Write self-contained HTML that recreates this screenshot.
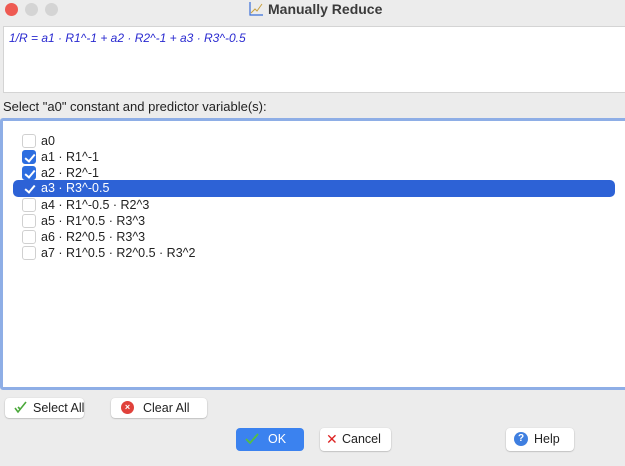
<!DOCTYPE html>
<html><head><style>
*{box-sizing:border-box;margin:0;padding:0}
body{width:625px;height:466px;background:#ececec;font-family:"Liberation Sans",sans-serif;position:relative;overflow:hidden;font-size:13px;color:#222}
.abs{position:absolute}
.dot{position:absolute;top:3px;width:13px;height:13px;border-radius:50%}
.ta{left:3px;top:26px;width:625px;height:67px;background:#fff;border:1px solid #d4d4d4}
.list{left:0;top:118px;width:628px;height:272px;background:#fff;border:3px solid #8eaee6;border-radius:3px}
.row{position:absolute;left:10px;height:16px;line-height:16px;font-size:12.5px;color:#222}
.cb{position:absolute;left:12px;top:1px;width:14px;height:14px;border:1px solid #d0d0d0;border-radius:3px;background:#fff}
.cb.on{background:#2d6ee0;border-color:#2d6ee0}
.cb.on:after{content:"";position:absolute;left:4px;top:1px;width:4px;height:8px;border:solid #fff;border-width:0 2px 2px 0;transform:rotate(40deg)}
.row span{position:absolute;left:31px;white-space:nowrap}
.btn{position:absolute;background:#fff;border-radius:4px;box-shadow:0 0.5px 1.5px rgba(0,0,0,.3);font-size:12.5px;line-height:20px;white-space:nowrap}
</style></head><body>
<div class="dot" style="left:5px;background:#ee5a52"></div>
<div class="dot" style="left:25px;background:#d4d4d4"></div>
<div class="dot" style="left:45px;background:#d4d4d4"></div>
<svg class="abs" style="left:248px;top:1px" width="16" height="16" viewBox="0 0 16 16"><path d="M2 1V14H15" stroke="#3a6fd8" fill="none" stroke-width="1.2"/><path d="M3 12L7 8L9 10L14 3" stroke="#c8a040" fill="none" stroke-width="1"/></svg>
<div class="abs" style="left:268px;top:1px;font-size:14px;font-weight:bold;color:#3b3b3b">Manually Reduce</div>
<div class="abs ta"><div style="position:absolute;left:5px;top:4px;color:#2a2ad0;font-style:italic;font-size:12px">1/R = a1 · R1^-1 + a2 · R2^-1 + a3 · R3^-0.5</div></div>
<div class="abs" style="left:3px;top:99px;font-size:13px;color:#222">Select "a0" constant and predictor variable(s):</div>
<div class="abs list">
<div class="row" style="top:12px;width:600px"><div class="cb" style="left:9px"></div><span style="left:28px">a0</span></div>
<div class="row" style="top:28px;width:600px"><div class="cb on" style="left:9px"></div><span style="left:28px">a1 · R1^-1</span></div>
<div class="row" style="top:44px;width:600px"><div class="cb on" style="left:9px"></div><span style="left:28px">a2 · R2^-1</span></div>
<div class="row" style="top:59px;left:10px;width:602px;height:17px;line-height:17px;background:#2d62d6;border-radius:5px;color:#fff"><div class="cb on" style="left:9px;background:none;border-color:transparent"></div><span style="left:28px">a3 · R3^-0.5</span></div>
<div class="row" style="top:76px;width:600px"><div class="cb" style="left:9px"></div><span style="left:28px">a4 · R1^-0.5 · R2^3</span></div>
<div class="row" style="top:92px;width:600px"><div class="cb" style="left:9px"></div><span style="left:28px">a5 · R1^0.5 · R3^3</span></div>
<div class="row" style="top:108px;width:600px"><div class="cb" style="left:9px"></div><span style="left:28px">a6 · R2^0.5 · R3^3</span></div>
<div class="row" style="top:124px;width:600px"><div class="cb" style="left:9px"></div><span style="left:28px">a7 · R1^0.5 · R2^0.5 · R3^2</span></div>
</div>
<div class="btn" style="left:5px;top:398px;width:79px;height:20px"><svg class="abs" style="left:9px;top:3px" width="14" height="14"><path d="M1 7L4 11L12 1M4 6L6 8" stroke="#4aa83a" fill="none" stroke-width="1.6"/></svg><span class="abs" style="left:28px">Select All</span></div>
<div class="btn" style="left:111px;top:398px;width:96px;height:20px"><div class="abs" style="left:10px;top:3px;width:13px;height:13px;border-radius:50%;background:#e0413b;color:#fff;font-size:9px;line-height:13px;text-align:center;font-weight:bold">×</div><span class="abs" style="left:32px">Clear All</span></div>
<div class="btn" style="left:236px;top:428px;width:68px;height:23px;background:#3b82ef;color:#fff;box-shadow:none"><svg class="abs" style="left:9px;top:5px" width="14" height="12"><path d="M1 6L5 10L13 1" stroke="#55c040" fill="none" stroke-width="1.8"/></svg><span class="abs" style="left:32px;top:1px">OK</span></div>
<div class="btn" style="left:320px;top:428px;width:71px;height:23px"><span class="abs" style="left:6px;top:1px;color:#d22;font-size:14px">✕</span><span class="abs" style="left:22px;top:1px">Cancel</span></div>
<div class="btn" style="left:506px;top:428px;width:68px;height:23px"><div class="abs" style="left:8px;top:4px;width:14px;height:14px;border-radius:50%;background:#3f7fe0;color:#fff;font-size:10px;line-height:14px;text-align:center;font-weight:bold">?</div><span class="abs" style="left:28px;top:1px">Help</span></div>
</body></html>
